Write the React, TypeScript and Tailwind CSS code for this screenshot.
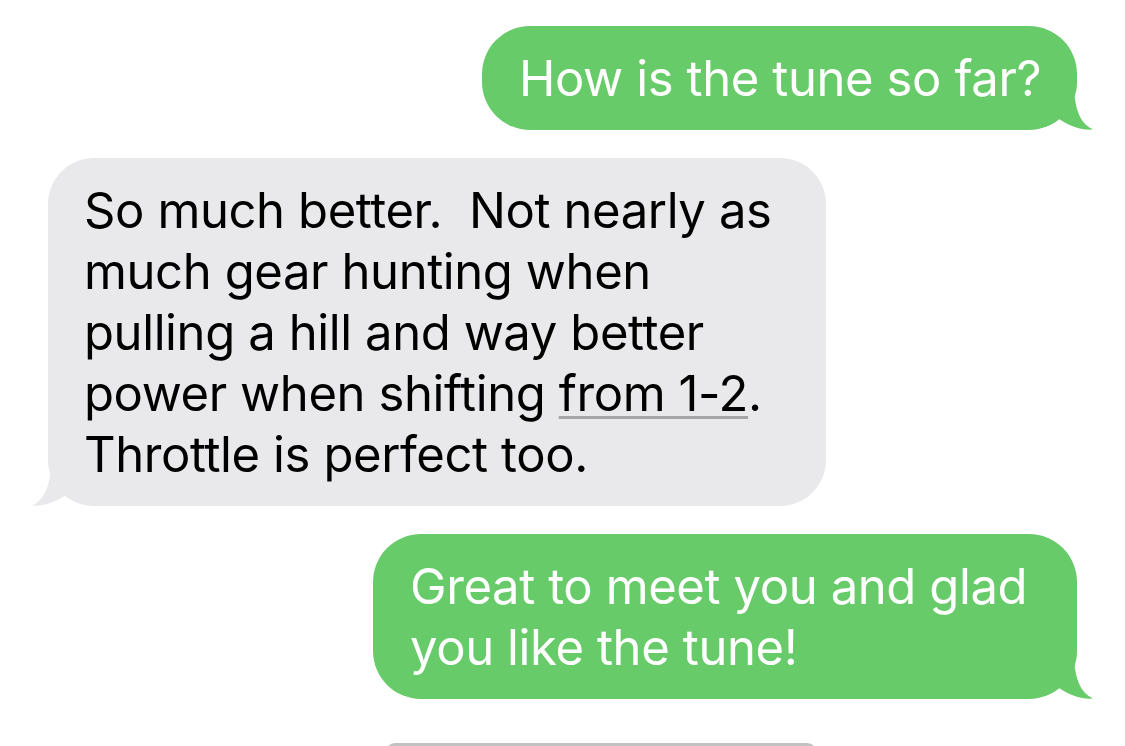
import React from "react";

const GREEN = "#67cb69";
const GRAY = "#e9e9eb";

function Tail({ color, side }: { color: string; side: "left" | "right" }) {
    return (
        <svg
            width="40"
            height="34"
            viewBox="0 0 40 34"
            className={
                side === "right"
                    ? "absolute bottom-0 right-[-16px]"
                    : "absolute bottom-0 left-[-16px] -scale-x-100"
            }
        >
            <path d="M21 -4 C23 16 28 28 40 33.5 C30 34.5 18 31 6 23 L0 0 Z" fill={color} />
        </svg>
    );
}

function Sent({ width, children }: { width: string; children: React.ReactNode }) {
    return (
        <div className="flex justify-end">
            <div
                className={`relative ${width} rounded-[48px] bg-[#67cb69] pl-[37px] pr-[30px] pt-[22px] pb-[21px] text-white`}
            >
                {children}
                <Tail color={GREEN} side="right" />
            </div>
        </div>
    );
}

export default function App() {
    return (
        <div
            className="h-[746px] overflow-hidden bg-white px-[48px] pt-[26px] text-[49px] leading-[61px] tracking-[-0.4px]"
            style={{ fontFamily: "Inter, 'Noto Sans', sans-serif" }}
        >
            <div className="flex flex-col gap-[28px]">
                <Sent width="w-[595px]">
                    <p className="whitespace-nowrap">How is the tune so far?</p>
                </Sent>

                <div className="flex justify-start">
                    <div className="relative w-[778px] rounded-[46px] bg-[#e9e9eb] pl-[36px] pr-[20px] pt-[22px] pb-[21px] text-black">
                        <p className="whitespace-pre">
                            {"So much better.  Not nearly as\nmuch gear hunting when\npulling a hill and way better\npower when shifting "}
                            <span className="underline decoration-[#a6a6a6] decoration-[3px] underline-offset-[5px]">from 1-2</span>
                            {".\nThrottle is perfect too."}
                        </p>
                        <Tail color={GRAY} side="left" />
                    </div>
                </div>

                <Sent width="w-[704px]">
                    <p className="whitespace-pre">{"Great to meet you and glad\nyou like the tune!"}</p>
                </Sent>
            </div>

            <div className="mt-[44px] ml-[337px] h-[40px] w-[432px] rounded-t-[10px] bg-[#c2c2c2]" />
        </div>
    );
}
